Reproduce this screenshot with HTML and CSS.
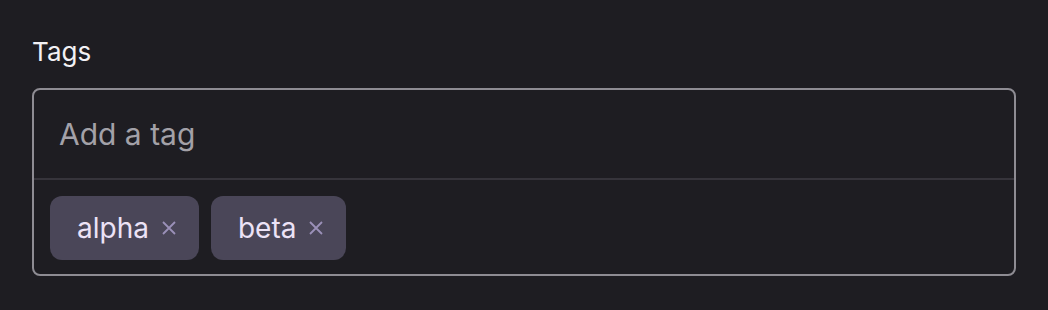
FILE: index.html
```html
<!DOCTYPE html>
<html lang="en">

<head>
  <meta charset="UTF-8" />
  <meta name="viewport" content="width=device-width, initial-scale=1.0" />
  <title>Tags</title>
  <link rel="stylesheet" href="styles.css">
</head>

<body>
  <div class="field">
    <label class="field-label" for="tag-input">Tags</label>
    <div class="tag-box">
      <input type="text" id="tag-input" class="tag-input" placeholder="Add a tag" />
      <ul class="tag-list">
        <li class="tag">
          <span>alpha</span>
          <button class="tag-remove" aria-label="Remove alpha">
            <svg width="14" height="14" viewBox="0 0 14 14"><path d="M1 1L13 13M13 1L1 13" /></svg>
          </button>
        </li>
        <li class="tag">
          <span>beta</span>
          <button class="tag-remove" aria-label="Remove beta">
            <svg width="14" height="14" viewBox="0 0 14 14"><path d="M1 1L13 13M13 1L1 13" /></svg>
          </button>
        </li>
      </ul>
    </div>
  </div>
</body>

</html>
```

FILE: styles.css
```css
* {
  box-sizing: border-box;
}

body {
  margin: 0;
  background: #1e1d22;
  font-family: Inter, "Noto Sans", sans-serif;
}

.field {
  padding: 34px 32px 0 32px;
}

.field-label {
  display: block;
  color: #f2f1f4;
  font-size: 26px;
  line-height: 36px;
  margin-bottom: 18px;
}

.tag-box {
  width: 984px;
  border: 2px solid #8e8c93;
  border-radius: 8px;
}

.tag-input {
  display: block;
  width: 100%;
  height: 90px;
  padding: 0 25px;
  appearance: none;
  border: none;
  border-bottom: 2px solid #36343b;
  background: transparent;
  color: #f2f1f4;
  font-family: inherit;
  font-size: 30px;
  outline: none;
}

.tag-input::placeholder {
  color: #a3a1a8;
}

.tag-list {
  margin: 0;
  padding: 16px 16px 14px 16px;
  list-style: none;
  display: flex;
  gap: 12px;
}

.tag {
  height: 64px;
  display: flex;
  align-items: center;
  padding: 0 23px 0 27px;
  border-radius: 12px;
  background: #4a4658;
  color: #ece2f6;
  font-size: 28px;
}

.tag-remove {
  display: flex;
  margin-left: 13px;
  padding: 0;
  appearance: none;
  border: none;
  background: none;
  cursor: pointer;
}

.tag-remove svg {
  stroke: #9b90b8;
  stroke-width: 1.8;
  fill: none;
}
```
